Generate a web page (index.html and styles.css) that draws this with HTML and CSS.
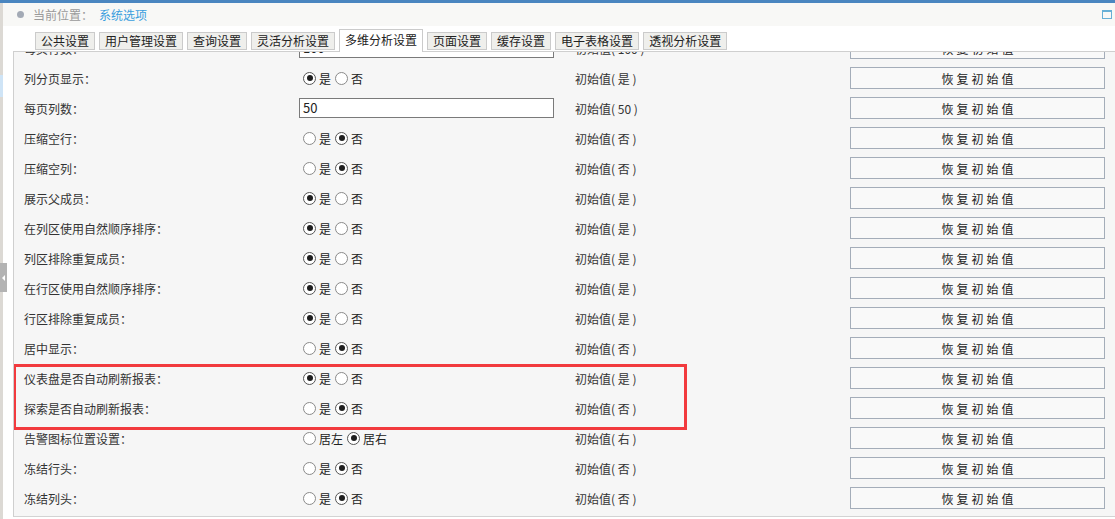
FILE: index.html
```html
<!DOCTYPE html>
<html lang="zh-CN">
<head>
<meta charset="utf-8">
<title>系统选项</title>
<link rel="stylesheet" href="styles.css">
</head>
<body>
<div class="topbar"></div>
<div class="layout">
  <aside class="side">
    <div class="side-hl"></div>
    <div class="side-handle"><span class="arrow"></span></div>
  </aside>
  <main class="main">
    <div class="crumb">
      <span class="dot"></span>
      <span class="crumb-label">当前位置：</span>
      <span class="crumb-link">系统选项</span>
      <span class="win-icon"></span>
    </div>
    <div class="tabs">
      <span class="tab">公共设置</span>
      <span class="tab">用户管理设置</span>
      <span class="tab">查询设置</span>
      <span class="tab">灵活分析设置</span>
      <span class="tab active">多维分析设置</span>
      <span class="tab">页面设置</span>
      <span class="tab">缓存设置</span>
      <span class="tab">电子表格设置</span>
      <span class="tab">透视分析设置</span>
    </div>
    <div class="panel">
      <div class="rows">
        <div class="row">
          <span class="label">每页行数：</span>
          <span class="ctrl"><span class="input">100</span></span>
          <span class="init">初始值( 100 )</span>
          <span class="btn">恢复初始值</span>
        </div>
        <div class="row">
          <span class="label">列分页显示：</span>
          <span class="ctrl"><i class="radio on"></i>是<i class="radio"></i>否</span>
          <span class="init">初始值( 是 )</span>
          <span class="btn">恢复初始值</span>
        </div>
        <div class="row">
          <span class="label">每页列数：</span>
          <span class="ctrl"><span class="input">50</span></span>
          <span class="init">初始值( 50 )</span>
          <span class="btn">恢复初始值</span>
        </div>
        <div class="row">
          <span class="label">压缩空行：</span>
          <span class="ctrl"><i class="radio"></i>是<i class="radio on"></i>否</span>
          <span class="init">初始值( 否 )</span>
          <span class="btn">恢复初始值</span>
        </div>
        <div class="row">
          <span class="label">压缩空列：</span>
          <span class="ctrl"><i class="radio"></i>是<i class="radio on"></i>否</span>
          <span class="init">初始值( 否 )</span>
          <span class="btn">恢复初始值</span>
        </div>
        <div class="row">
          <span class="label">展示父成员：</span>
          <span class="ctrl"><i class="radio on"></i>是<i class="radio"></i>否</span>
          <span class="init">初始值( 是 )</span>
          <span class="btn">恢复初始值</span>
        </div>
        <div class="row">
          <span class="label">在列区使用自然顺序排序：</span>
          <span class="ctrl"><i class="radio on"></i>是<i class="radio"></i>否</span>
          <span class="init">初始值( 是 )</span>
          <span class="btn">恢复初始值</span>
        </div>
        <div class="row">
          <span class="label">列区排除重复成员：</span>
          <span class="ctrl"><i class="radio on"></i>是<i class="radio"></i>否</span>
          <span class="init">初始值( 是 )</span>
          <span class="btn">恢复初始值</span>
        </div>
        <div class="row">
          <span class="label">在行区使用自然顺序排序：</span>
          <span class="ctrl"><i class="radio on"></i>是<i class="radio"></i>否</span>
          <span class="init">初始值( 是 )</span>
          <span class="btn">恢复初始值</span>
        </div>
        <div class="row">
          <span class="label">行区排除重复成员：</span>
          <span class="ctrl"><i class="radio on"></i>是<i class="radio"></i>否</span>
          <span class="init">初始值( 是 )</span>
          <span class="btn">恢复初始值</span>
        </div>
        <div class="row">
          <span class="label">居中显示：</span>
          <span class="ctrl"><i class="radio"></i>是<i class="radio on"></i>否</span>
          <span class="init">初始值( 否 )</span>
          <span class="btn">恢复初始值</span>
        </div>
        <div class="highlight">
          <div class="row">
            <span class="label">仪表盘是否自动刷新报表：</span>
            <span class="ctrl"><i class="radio on"></i>是<i class="radio"></i>否</span>
            <span class="init">初始值( 是 )</span>
            <span class="btn">恢复初始值</span>
          </div>
          <div class="row">
            <span class="label">探索是否自动刷新报表：</span>
            <span class="ctrl"><i class="radio"></i>是<i class="radio on"></i>否</span>
            <span class="init">初始值( 否 )</span>
            <span class="btn">恢复初始值</span>
          </div>
        </div>
        <div class="row">
          <span class="label">告警图标位置设置：</span>
          <span class="ctrl"><i class="radio"></i>居左<i class="radio on"></i>居右</span>
          <span class="init">初始值( 右 )</span>
          <span class="btn">恢复初始值</span>
        </div>
        <div class="row">
          <span class="label">冻结行头：</span>
          <span class="ctrl"><i class="radio"></i>是<i class="radio on"></i>否</span>
          <span class="init">初始值( 否 )</span>
          <span class="btn">恢复初始值</span>
        </div>
        <div class="row">
          <span class="label">冻结列头：</span>
          <span class="ctrl"><i class="radio"></i>是<i class="radio on"></i>否</span>
          <span class="init">初始值( 否 )</span>
          <span class="btn">恢复初始值</span>
        </div>
      </div>
    </div>
  </main>
</div>
</body>
</html>
```
FILE: styles.css
```css
* { box-sizing: border-box; }
html, body {
  margin: 0;
  padding: 0;
  width: 1115px;
  height: 519px;
  overflow: hidden;
  background: #ffffff;
  font-family: "Noto Sans CJK SC", "Noto Sans", "DejaVu Sans", sans-serif;
  font-size: 12px;
  color: #333333;
}
.topbar {
  height: 3px;
  background: #4a86c0;
}
.layout {
  display: flex;
  height: 516px;
}
.side {
  width: 3px;
  flex: none;
  background: #dcd9d4;
  position: relative;
  display: flex;
  flex-direction: column;
}
.side-hl {
  margin-top: 72px;
  height: 22px;
  background: #cfe4f6;
}
.side-handle {
  position: absolute;
  left: 0;
  top: 260px;
  width: 7px;
  height: 29px;
  background: #b3b3b3;
  display: flex;
  align-items: center;
  justify-content: center;
}
.side-handle .arrow {
  width: 0;
  height: 0;
  border-top: 3px solid transparent;
  border-bottom: 3px solid transparent;
  border-right: 3px solid #ffffff;
}
.main {
  flex: 1;
  display: flex;
  flex-direction: column;
  min-width: 0;
}
.crumb {
  height: 23px;
  flex: none;
  background: #f8f8f6;
  display: flex;
  align-items: center;
  padding-left: 14px;
  padding-right: 3px;
}
.dot {
  width: 7px;
  height: 7px;
  border-radius: 50%;
  background: #a3aab5;
  margin-right: 9px;
}
.crumb-label {
  color: #9a9a9a;
  margin-right: 6px;
}
.crumb-link {
  color: #3a9ede;
}
.win-icon {
  margin-left: auto;
  width: 10px;
  height: 9px;
  border: 1px solid #67b0d6;
  border-top-width: 2px;
  margin-top: -1px;
}
.tabs {
  height: 25px;
  flex: none;
  display: flex;
  align-items: flex-end;
  padding-left: 32px;
}
.tab {
  height: 18px;
  line-height: 16px;
  padding: 0 5px;
  border: 1px solid #cbcbcb;
  background: #efefec;
  margin-right: 4px;
  margin-bottom: 1px;
  color: #222222;
  white-space: nowrap;
}
.tab.active {
  height: 23px;
  line-height: 20px;
  background: #ffffff;
  border-bottom: none;
  margin-bottom: -1px;
  position: relative;
  z-index: 1;
}
.panel {
  margin-left: 10px;
  height: 466px;
  flex: none;
  background: #f6f6f6;
  border-top: 1px solid #cfcfcf;
  border-left: 1px solid #cfcfcf;
  border-bottom: 1px solid #d3d3d3;
  overflow: hidden;
}
.rows {
  margin-top: -19px;
}
.row {
  height: 30px;
  display: grid;
  grid-template-columns: 275px 276px 275px 255px;
  align-items: center;
  padding-left: 10px;
}
.label {
  color: #333333;
  white-space: nowrap;
}
.ctrl {
  display: flex;
  align-items: center;
  color: #222222;
  white-space: nowrap;
}
.radio {
  display: inline-flex;
  align-items: center;
  justify-content: center;
  width: 13px;
  height: 13px;
  border-radius: 50%;
  border: 1px solid #8a8a8a;
  background: #ffffff;
  margin: 0 3px 0 4px;
}
.radio.on {
  border-color: #555555;
}
.radio.on::after {
  content: "";
  width: 6px;
  height: 6px;
  border-radius: 50%;
  background: #1e1e1e;
}
.input {
  display: block;
  width: 255px;
  height: 20px;
  border: 1px solid #7a7a7a;
  background: #ffffff;
  font-size: 13px;
  line-height: 18px;
  padding-left: 3px;
  color: #222222;
}
.init {
  color: #333333;
  white-space: pre;
}
.btn {
  height: 22px;
  border: 1px solid #a4adb9;
  background: #f9f9f9;
  display: flex;
  align-items: center;
  justify-content: center;
  letter-spacing: 3px;
  padding-left: 3px;
  color: #222222;
}
.highlight {
  position: relative;
}
.highlight::after {
  content: "";
  position: absolute;
  left: -1px;
  top: 1px;
  width: 674px;
  height: 60px;
  border: 3px solid #f23a3e;
  pointer-events: none;
}
.highlight::after {
  width: 668px;
}
```
